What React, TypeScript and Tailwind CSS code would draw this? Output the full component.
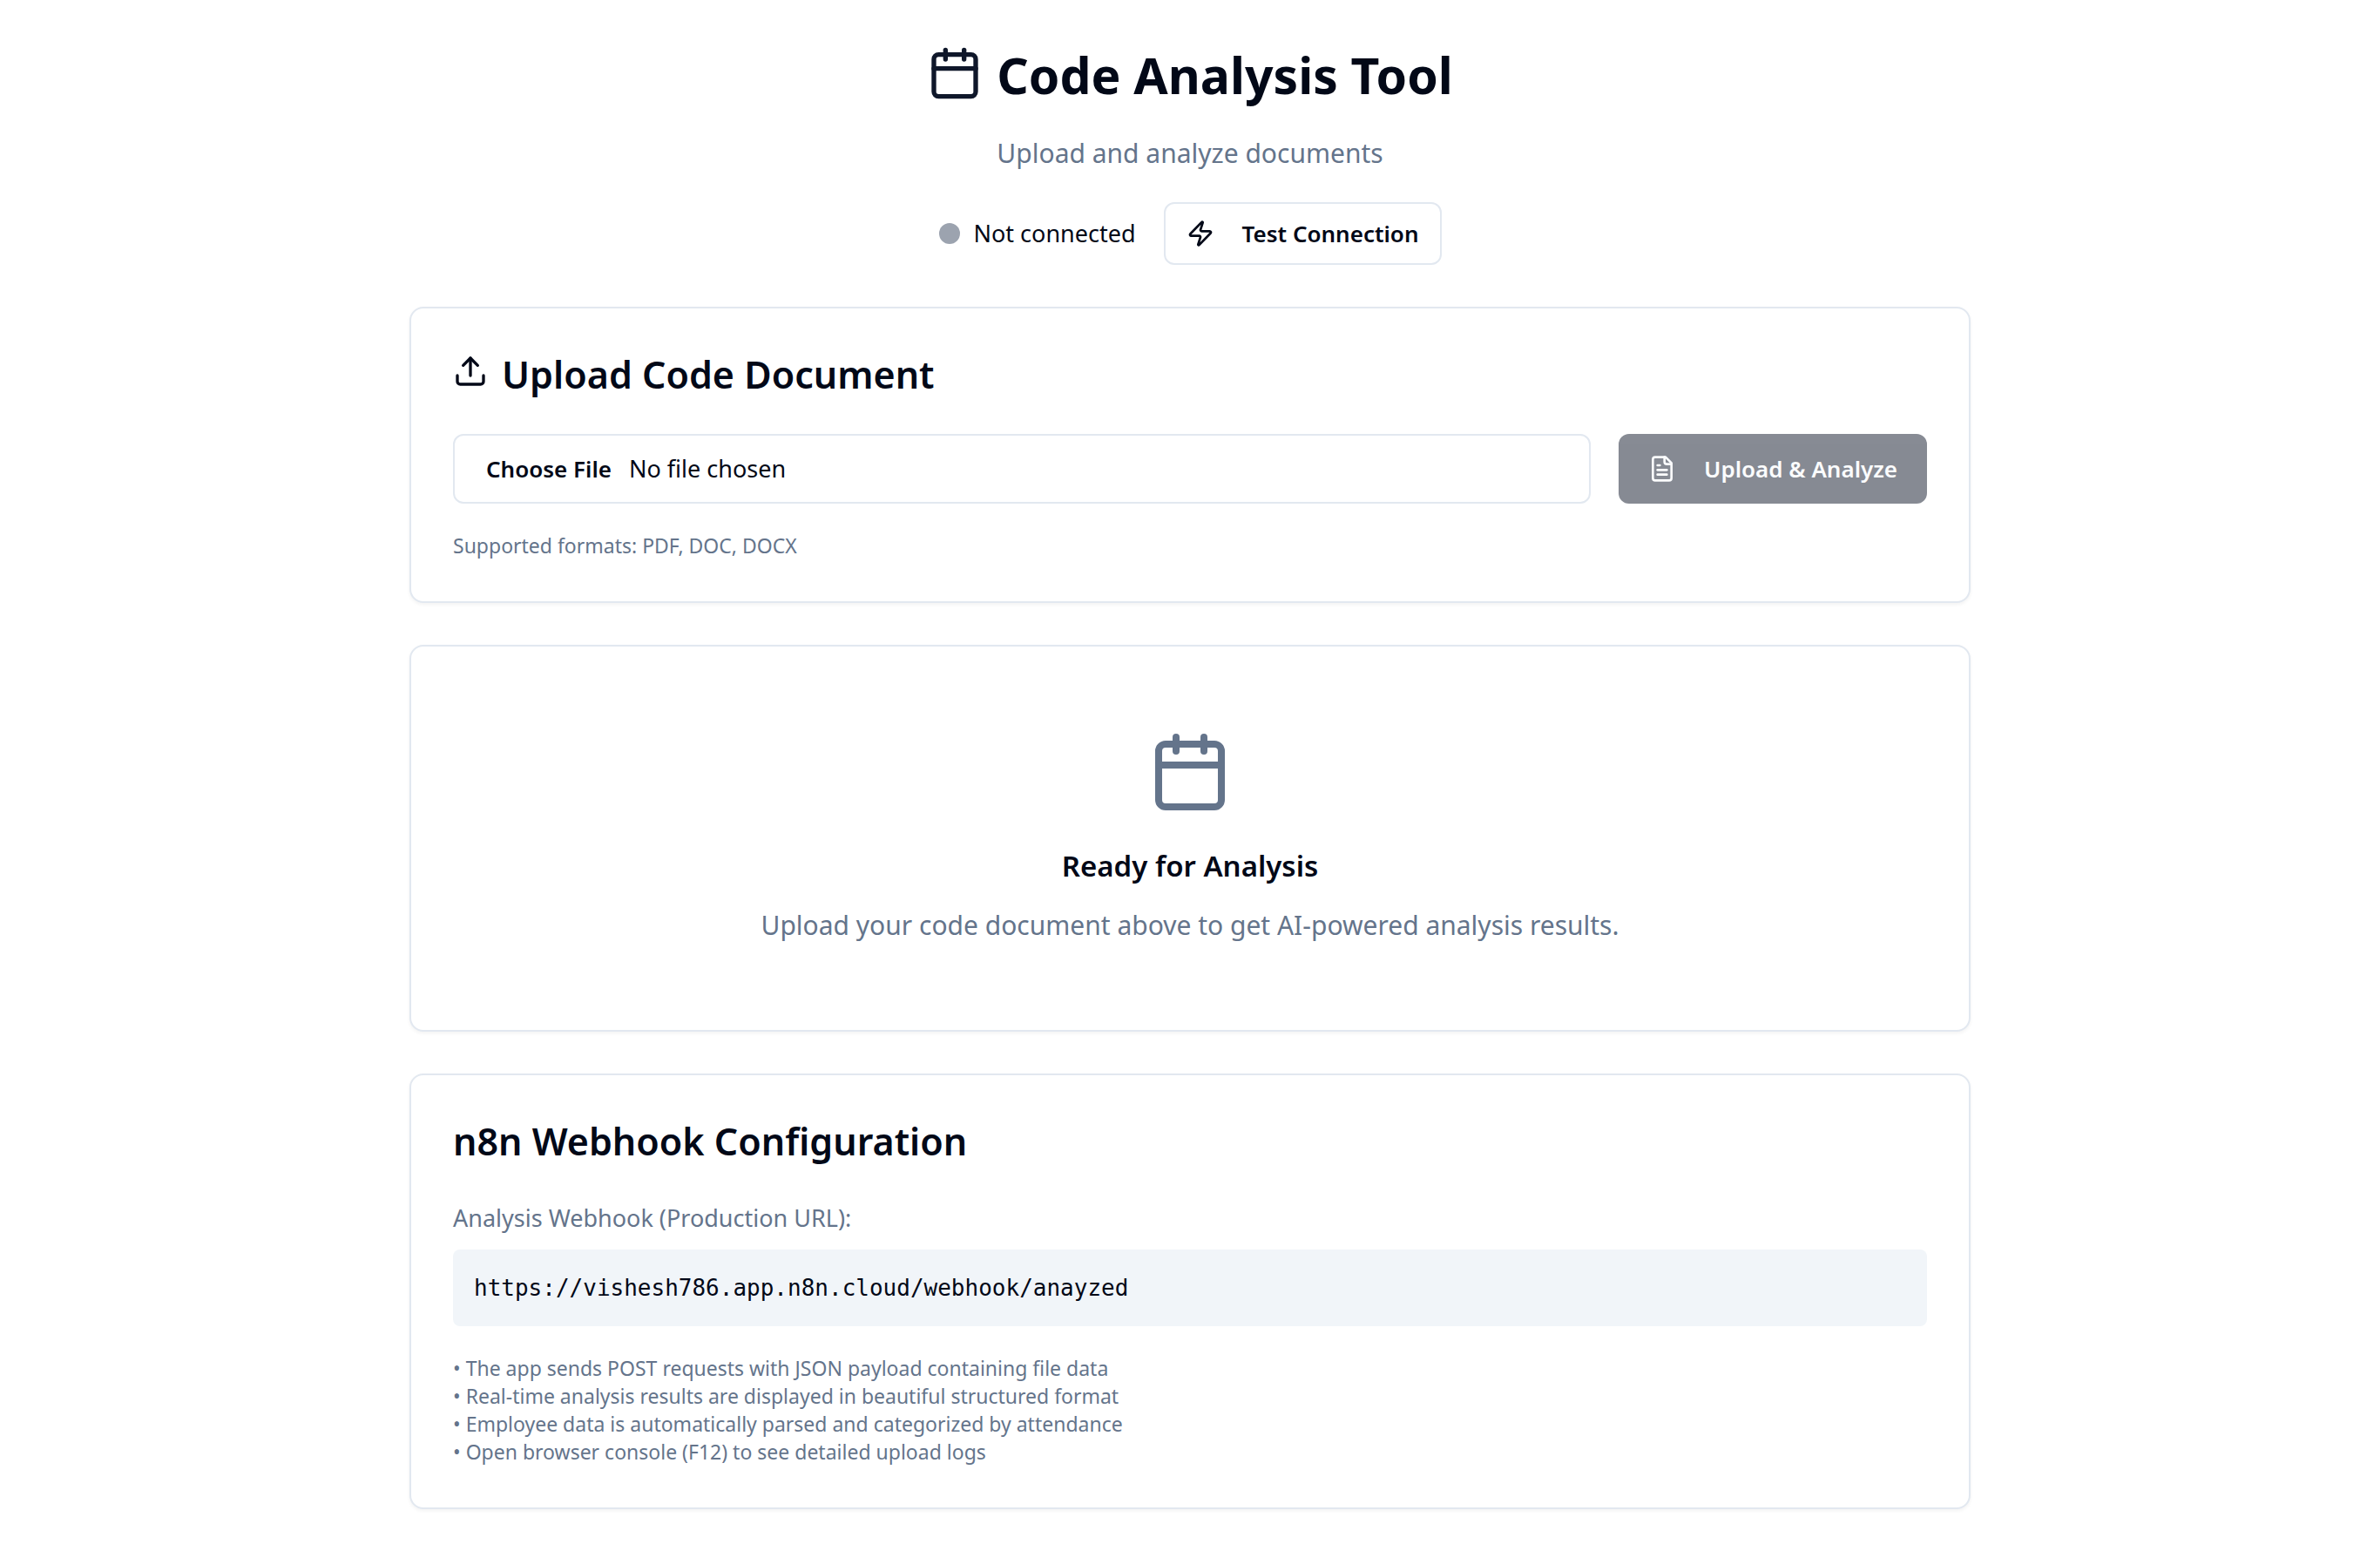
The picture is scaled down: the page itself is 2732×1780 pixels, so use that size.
import React from "react";
import type { ReactNode } from "react";

function Icon({ className, children }: { className: string; children: ReactNode }) {
  return (
    <svg
      viewBox="0 0 24 24"
      fill="none"
      stroke="currentColor"
      strokeWidth={2}
      strokeLinecap="round"
      strokeLinejoin="round"
      aria-hidden="true"
      className={className}
    >
      {children}
    </svg>
  );
}

function CalendarIcon({ className }: { className: string }) {
  return (
    <Icon className={className}>
      <path d="M8 2v4" />
      <path d="M16 2v4" />
      <rect width="18" height="18" x="3" y="4" rx="2" />
      <path d="M3 10h18" />
    </Icon>
  );
}

function UploadIcon({ className }: { className: string }) {
  return (
    <Icon className={className}>
      <path d="M21 15v4a2 2 0 0 1-2 2H5a2 2 0 0 1-2-2v-4" />
      <path d="m17 8-5-5-5 5" />
      <path d="M12 3v12" />
    </Icon>
  );
}

function ZapIcon({ className }: { className: string }) {
  return (
    <Icon className={className}>
      <path d="M4 14a1 1 0 0 1-.78-1.63l9.9-10.2a.5.5 0 0 1 .86.46l-1.92 6.02A1 1 0 0 0 13 10h7a1 1 0 0 1 .78 1.63l-9.9 10.2a.5.5 0 0 1-.86-.46l1.92-6.02A1 1 0 0 0 11 14z" />
    </Icon>
  );
}

function FileTextIcon({ className }: { className: string }) {
  return (
    <Icon className={className}>
      <path d="M15 2H6a2 2 0 0 0-2 2v16a2 2 0 0 0 2 2h12a2 2 0 0 0 2-2V7Z" />
      <path d="M14 2v4a2 2 0 0 0 2 2h4" />
      <path d="M10 9H8" />
      <path d="M16 13H8" />
      <path d="M16 17H8" />
    </Icon>
  );
}

function Card({ children }: { children: ReactNode }) {
  return (
    <section className="rounded-2xl border-2 border-[#e2e8f0] bg-white p-12 shadow-[0_2px_4px_0_rgba(0,0,0,0.05)]">
      {children}
    </section>
  );
}

const notes = [
  "The app sends POST requests with JSON payload containing file data",
  "Real-time analysis results are displayed in beautiful structured format",
  "Employee data is automatically parsed and categorized by attendance",
  "Open browser console (F12) to see detailed upload logs",
];

export default function App() {
  return (
    <div className="min-h-screen bg-white p-12 font-['Noto_Sans','Open_Sans',sans-serif] text-[27px] leading-10 text-[#020817]">
      <main className="mx-auto flex max-w-[1792px] flex-col gap-12">
        <header className="flex flex-col items-center">
          <h1 className="flex items-start gap-4 text-[57px] leading-[76px] font-bold">
            <CalendarIcon className="mt-1 size-16 shrink-0 text-[#0f172a]" />
            Code Analysis Tool
          </h1>
          <p className="mt-7 text-[30px] leading-12 text-[#64748b]">Upload and analyze documents</p>
          <div className="mt-8 flex items-center gap-8">
            <div className="flex items-center gap-4">
              <span className="size-6 rounded-full bg-[#9ca3af]" />
              <span>Not connected</span>
            </div>
            <button
              type="button"
              className="flex h-18 items-center gap-8 rounded-xl border-2 border-[#e2e8f0] bg-white px-6 text-[26px] font-semibold"
            >
              <ZapIcon className="size-8" />
              Test Connection
            </button>
          </div>
        </header>

        <Card>
          <h2 className="flex items-start gap-4 text-[43px] leading-14 font-semibold">
            <UploadIcon className="mt-1 size-10 shrink-0" />
            Upload Code Document
          </h2>
          <div className="mt-10 flex items-center gap-8">
            <input
              type="file"
              aria-label="Code document"
              accept=".pdf,.doc,.docx"
              className="h-20 min-w-0 flex-1 rounded-xl border-2 border-[#e2e8f0] bg-white px-9 py-[18px] file:mr-5 file:border-0 file:bg-transparent file:p-0 file:text-[26px] file:font-semibold"
            />
            <button
              type="button"
              disabled
              className="flex h-20 w-[354px] shrink-0 items-center justify-center gap-8 rounded-xl bg-[#0f172a] text-[26px] font-semibold text-[#f8fafc] opacity-50"
            >
              <FileTextIcon className="size-8" />
              Upload &amp; Analyze
            </button>
          </div>
          <p className="mt-8 text-[23px] leading-8 text-[#64748b]">Supported formats: PDF, DOC, DOCX</p>
        </Card>

        <Card>
          <div className="flex flex-col items-center py-12 text-center">
            <CalendarIcon className="size-24 text-[#64748b]" />
            <h3 className="mt-8 text-[33px] leading-14 font-semibold">Ready for Analysis</h3>
            <p className="mt-4 text-[30px] leading-12 text-[#64748b]">
              Upload your code document above to get AI-powered analysis results.
            </p>
          </div>
        </Card>

        <Card>
          <h2 className="text-[43px] leading-14 font-semibold">n8n Webhook Configuration</h2>
          <p className="mt-10 text-[#64748b]">Analysis Webhook (Production URL):</p>
          <code className="mt-4 block rounded-lg bg-[#f1f5f9] p-6 font-['DejaVu_Sans_Mono',monospace] text-[26px]">
            https://vishesh786.app.n8n.cloud/webhook/anayzed
          </code>
          <div className="mt-8 text-[23px] leading-8 text-[#64748b]">
            {notes.map((note) => (
              <p key={note}>• {note}</p>
            ))}
          </div>
        </Card>
      </main>
    </div>
  );
}
